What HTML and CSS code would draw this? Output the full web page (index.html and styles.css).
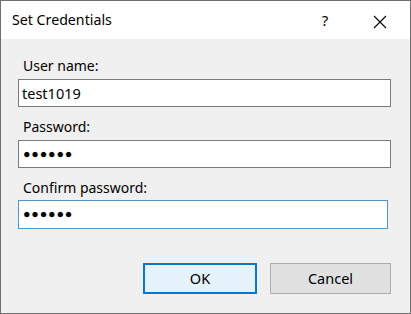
FILE: index.html
```html
<!DOCTYPE html>
<html>
<head>
<meta charset="utf-8">
<link rel="stylesheet" href="styles.css">
</head>
<body>
<div class="window">
  <div class="titlebar">
    <div class="title">Set Credentials</div>
    <div class="help">?</div>
    <div class="close">
      <svg width="14" height="14" viewBox="0 0 14 14"><path d="M1 1 L13 13 M13 1 L1 13" stroke="#000" stroke-width="1.1" fill="none"/></svg>
    </div>
  </div>
  <div class="content">
    <div class="field">
      <div class="label">User name:</div>
      <div class="box">test1019</div>
    </div>
    <div class="field">
      <div class="label">Password:</div>
      <div class="box dots">●●●●●●</div>
    </div>
    <div class="field">
      <div class="label">Confirm password:</div>
      <div class="box dots focused">●●●●●●</div>
    </div>
    <div class="buttons">
      <div class="btn ok">OK</div>
      <div class="btn cancel">Cancel</div>
    </div>
  </div>
</div>
</body>
</html>
```
FILE: styles.css
```css
html, body {
  margin: 0;
  padding: 0;
  background: #6d6d6d;
}
.window {
  width: 411px;
  height: 314px;
  box-sizing: border-box;
  border: 1px solid #6f6f6f;
  background: #f0f0f0;
  display: flex;
  flex-direction: column;
  font-family: "Noto Sans", "Open Sans", sans-serif;
  color: #000;
}
.titlebar {
  height: 38px;
  flex: none;
  background: #fff;
  display: flex;
  align-items: center;
  padding-left: 11px;
}
.title {
  font-size: 14.2px;
  line-height: 20px;
  flex: 1;
  margin-top: -1px;
}
.help {
  font-size: 15px;
  line-height: 20px;
  width: 20px;
  text-align: center;
  margin-right: 38px;
  margin-top: -1px;
}
.close {
  width: 14px;
  height: 14px;
  margin-right: 23px;
  margin-top: 3px;
}
.close svg { display: block; }
.content {
  flex: 1;
  display: flex;
  flex-direction: column;
  padding: 17px 19px 0 17px;
}
.field {
  display: flex;
  flex-direction: column;
  margin-bottom: 10px;
}
.label {
  font-size: 14px;
  line-height: 20px;
  padding-left: 5px;
  margin-bottom: 3px;
}
.box {
  height: 28px;
  box-sizing: border-box;
  border: 1px solid #7a7a7a;
  background: #fff;
  font-size: 14.5px;
  line-height: 26px;
  padding-left: 3px;
}
.box.dots {
  font-size: 12.5px;
  letter-spacing: 0.8px;
  padding-left: 4px;
}
.box.focused {
  border-color: #4f95d0;
  margin-right: 3px;
  margin-top: -1px;
  height: 29px;
}
.buttons {
  display: flex;
  justify-content: flex-end;
  gap: 13px;
  margin-top: 24px;
}
.btn {
  height: 31px;
  box-sizing: border-box;
  font-size: 14.5px;
  line-height: 29px;
  text-align: center;
}
.ok {
  width: 114px;
  background: #e5f1fb;
  border: 2px solid #0078d7;
  line-height: 27px;
}
.cancel {
  width: 121px;
  background: #e1e1e1;
  border: 1px solid #adadad;
}
```
